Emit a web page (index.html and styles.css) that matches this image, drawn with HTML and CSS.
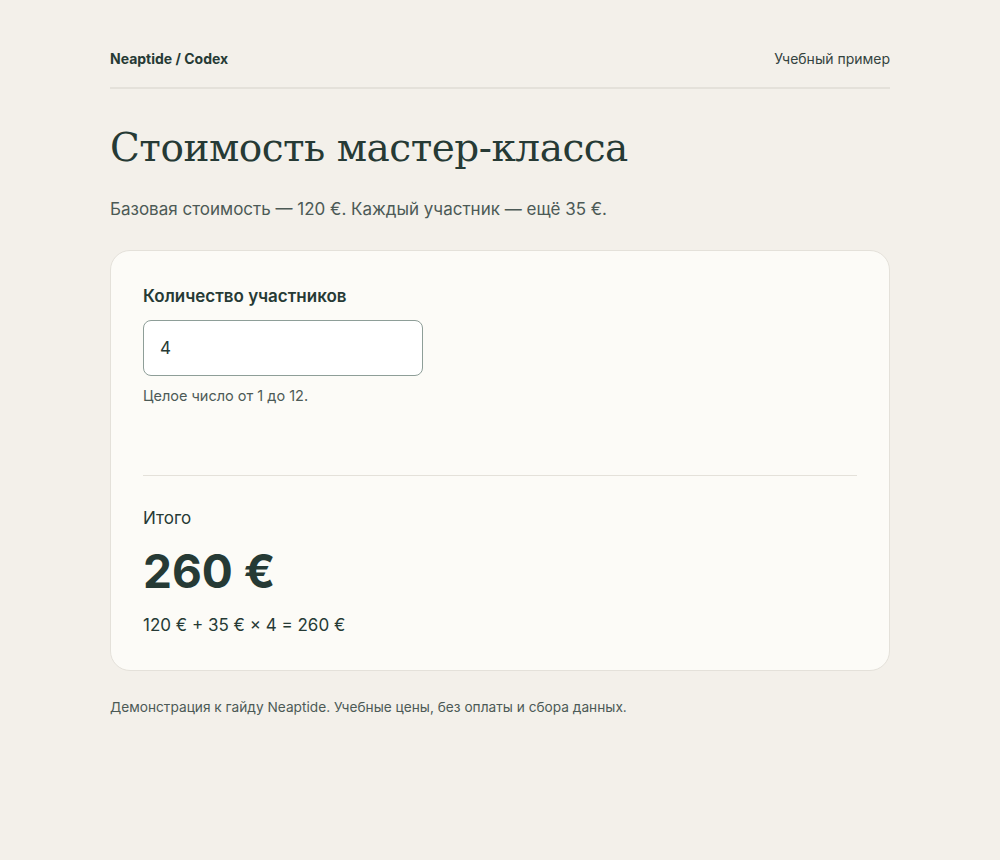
FILE: index.html
```html
<!DOCTYPE html>
<html lang="ru">
<head>
    <meta charset="UTF-8">
    <meta name="viewport" content="width=device-width, initial-scale=1.0">
    <title>Стоимость мастер-класса</title>
    <link rel="stylesheet" href="styles.css">
</head>
<body>
    <div class="page">
        <header class="top">
            <div class="brand">Neaptide / Codex</div>
            <div class="tag">Учебный пример</div>
        </header>

        <h1 class="title">Стоимость мастер-класса</h1>
        <p class="lead">Базовая стоимость — 120 €. Каждый участник — ещё 35 €.</p>

        <div class="card">
            <div class="field">
                <label class="field-label" for="count">Количество участников</label>
                <input class="field-input" id="count" type="text" value="4">
                <div class="field-hint">Целое число от 1 до 12.</div>
            </div>
            <div class="result">
                <div class="result-label">Итого</div>
                <div class="result-total" id="total">260 €</div>
                <div class="result-formula" id="formula">120 € + 35 € × 4 = 260 €</div>
            </div>
        </div>

        <p class="note">Демонстрация к гайду Neaptide. Учебные цены, без оплаты и сбора данных.</p>
    </div>

    <script>
        const input = document.getElementById('count');
        const total = document.getElementById('total');
        const formula = document.getElementById('formula');

        // пересчёт при вводе
        input.addEventListener('input', function () {
            const n = parseInt(input.value, 10);
            if (isNaN(n) || n < 1 || n > 12) return;
            const sum = 120 + 35 * n;
            total.textContent = sum + ' €';
            formula.textContent = '120 € + 35 € × ' + n + ' = ' + sum + ' €';
        });
    </script>
</body>
</html>
```

FILE: styles.css
```css
body {
    margin: 0;
    background-color: #f3f0ea;
    color: #263a35;
    font-family: Inter, "Noto Sans", sans-serif;
}
.page {
    width: 780px;
    margin: 0 auto;
    padding-top: 50px;
}
.top {
    display: flex;
    justify-content: space-between;
    align-items: center;
    padding-bottom: 20px;
    border-bottom: 2px solid #e4e1da;
    font-size: 14px;
    line-height: 17px;
}
.brand {
    font-weight: 700;
}
.tag {
    color: #33433f;
}
.title {
    font-family: "DejaVu Serif", "Liberation Serif", serif;
    font-weight: 400;
    font-size: 39px;
    line-height: 50px;
    margin: 34px 0 0;
    letter-spacing: -0.5px;
}
.lead {
    margin: 23px 0 28px;
    font-size: 17px;
    line-height: 26px;
    color: #4c5a56;
}
.card {
    background-color: #fcfbf7;
    border: 1px solid #e4e1da;
    border-radius: 20px;
    padding: 32px 32px 33px;
}
.field {
    padding-bottom: 69px;
    border-bottom: 1px solid #e4e1da;
}
.field-label {
    display: block;
    font-size: 17px;
    line-height: 26px;
    font-weight: 600;
    margin-bottom: 11px;
}
.field-input {
    box-sizing: border-box;
    width: 280px;
    height: 56px;
    padding: 0 16px;
    border: 1px solid #8e9e98;
    border-radius: 8px;
    background-color: #fff;
    color: #263a35;
    font-family: inherit;
    font-size: 17px;
    outline: none;
}
.field-hint {
    margin-top: 10px;
    font-size: 14.5px;
    line-height: 20px;
    color: #4c5a56;
}
.result {
    padding-top: 30px;
}
.result-label {
    font-size: 17px;
    line-height: 24px;
}
.result-total {
    margin-top: 14px;
    font-size: 46px;
    line-height: 54px;
    font-weight: 700;
}
.result-formula {
    margin-top: 15px;
    font-size: 17px;
    line-height: 24px;
}
.note {
    margin: 26px 0 0;
    font-size: 13.7px;
    line-height: 20px;
    color: #4c5a56;
}
```
